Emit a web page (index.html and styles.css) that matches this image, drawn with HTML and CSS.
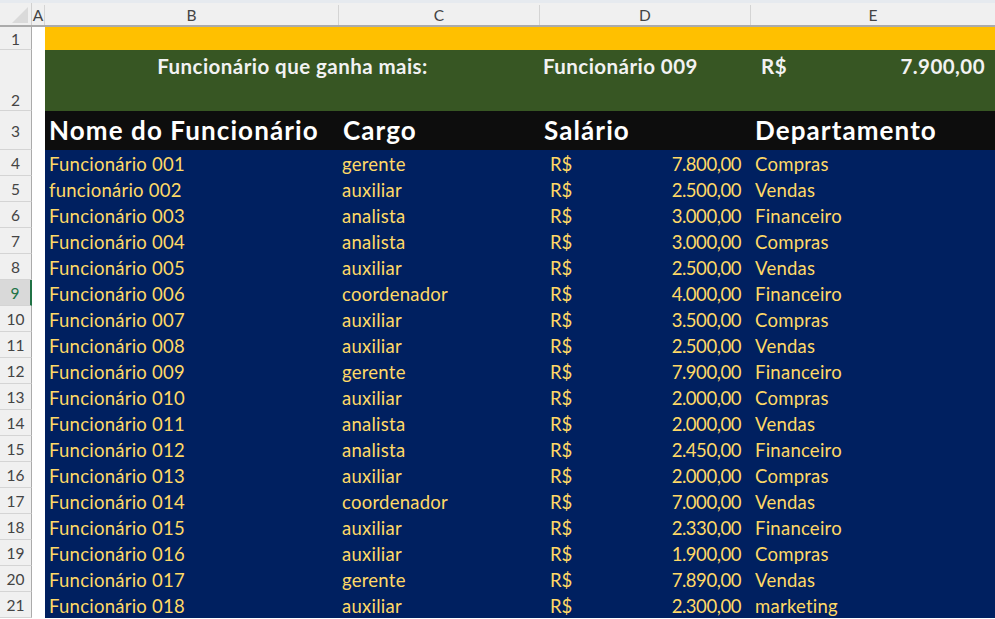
FILE: index.html
```html
<!DOCTYPE html>
<html lang="pt-BR">
<head>
<meta charset="utf-8">
<title>Planilha</title>
<link rel="stylesheet" href="styles.css">
</head>
<body>
<div class="sheet">
  <div class="topstrip"></div>
  <div class="colhdr">
    <div class="corner"><svg width="31" height="22" viewBox="0 0 31 22"><polygon points="28,4 28,20 12,20" fill="#dadada"/></svg></div>
    <div class="ch ch-a">A</div>
    <div class="ch ch-b">B</div>
    <div class="ch ch-c">C</div>
    <div class="ch ch-d">D</div>
    <div class="ch ch-e">E</div>
  </div>

  <div class="row r1">
    <div class="rh">1</div><div class="ca"></div>
    <div class="band yellow"></div>
  </div>

  <div class="row r2">
    <div class="rh rh-bottom">2</div><div class="ca"></div>
    <div class="band green">
      <div class="top-label">Funcionário que ganha mais:</div>
      <div class="top-name">Funcionário 009</div>
      <div class="top-val"><span>R$</span><span>7.900,00</span></div>
    </div>
  </div>

  <div class="row r3">
    <div class="rh">3</div><div class="ca"></div>
    <div class="band black">
      <div class="h h-b">Nome do Funcionário</div>
      <div class="h h-c">Cargo</div>
      <div class="h h-d">Salário</div>
      <div class="h h-e">Departamento</div>
    </div>
  </div>

  <div id="rows"></div>
</div>
<script src="app.js"></script>
</body>
</html>
```

FILE: app.js
```js
const data = [
  ["Funcionário 001","gerente","7.800,00","Compras"],
  ["funcionário 002","auxiliar","2.500,00","Vendas"],
  ["Funcionário 003","analista","3.000,00","Financeiro"],
  ["Funcionário 004","analista","3.000,00","Compras"],
  ["Funcionário 005","auxiliar","2.500,00","Vendas"],
  ["Funcionário 006","coordenador","4.000,00","Financeiro"],
  ["Funcionário 007","auxiliar","3.500,00","Compras"],
  ["Funcionário 008","auxiliar","2.500,00","Vendas"],
  ["Funcionário 009","gerente","7.900,00","Financeiro"],
  ["Funcionário 010","auxiliar","2.000,00","Compras"],
  ["Funcionário 011","analista","2.000,00","Vendas"],
  ["Funcionário 012","analista","2.450,00","Financeiro"],
  ["Funcionário 013","auxiliar","2.000,00","Compras"],
  ["Funcionário 014","coordenador","7.000,00","Vendas"],
  ["Funcionário 015","auxiliar","2.330,00","Financeiro"],
  ["Funcionário 016","auxiliar","1.900,00","Compras"],
  ["Funcionário 017","gerente","7.890,00","Vendas"],
  ["Funcionário 018","auxiliar","2.300,00","marketing"]
];
const host = document.getElementById("rows");
data.forEach((d, i) => {
  const n = i + 4;
  const row = document.createElement("div");
  row.className = "row data";
  row.innerHTML =
    `<div class="rh${n === 9 ? " sel" : ""}">${n}</div><div class="ca"></div>` +
    `<div class="band navy">` +
      `<div class="c c-b">${d[0]}</div>` +
      `<div class="c c-c">${d[1]}</div>` +
      `<div class="c c-d"><span>R$</span><span class="amt">${d[2]}</span></div>` +
      `<div class="c c-e">${d[3]}</div>` +
    `</div>`;
  host.appendChild(row);
});
```

FILE: styles.css
```css
* { box-sizing: border-box; }
html, body { margin: 0; padding: 0; background: #ffffff; }
body { width: 995px; height: 619px; overflow: hidden; font-family: Lato, "Open Sans", sans-serif; }

.sheet { width: 995px; }

.topstrip { height: 3px; background: #e6eaef; }

.colhdr {
  display: grid;
  grid-template-columns: 32px 13px 294px 201px 211px 244px;
  height: 24px;
  background: #f0f0f0;
  border-bottom: 2px solid #ababab;
}
.corner { border-right: 1px solid #d0d0d0; }
.corner svg { display: block; }
.ch {
  display: flex; align-items: center; justify-content: center;
  font-size: 15.5px; color: #444444;
  border-right: 1px solid #d4d4d4;
  margin: 2px 0 0 0;
}
.ch-e { border-right: 0; }

.row { display: flex; }
.rh {
  width: 32px; flex: none;
  background: #f0f0f0;
  border-right: 1px solid #ababab;
  border-bottom: 1px solid #d4d4d4;
  color: #444444; font-size: 15.5px;
  display: flex; align-items: center; justify-content: center;
  padding-top: 1px;
}
.rh-bottom { align-items: flex-end; padding-bottom: 1px; }
.rh.sel {
  background: #d9d9d9;
  color: #217346;
  border-right: 2px solid #217346;
}
.ca { width: 13px; flex: none; background: #ffffff; }

.band {
  flex: 1;
  display: grid;
  grid-template-columns: 294px 201px 211px 244px;
}
.yellow { background: #ffc000; }
.green { background: #375623; }
.black { background: #0d0d0d; }
.navy { background: #002060; }

.r1 { height: 23px; }
.r2 { height: 61px; }
.r3 { height: 39px; }
.data { height: 26px; }

/* row 2 */
.r2 .band { color: #f2f2f2; font-weight: 700; font-size: 20.5px; line-height: 24px; letter-spacing: 0.45px; }
.top-label { grid-column: 1 / 3; text-align: center; padding-top: 4px; }
.top-name { padding: 4px 0 0 3px; }
.top-val { display: flex; justify-content: space-between; padding: 4px 10px 0 10px; }

/* row 3 */
.h { color: #ffffff; font-weight: 700; font-size: 26px; line-height: 39px; letter-spacing: 1.1px; padding-left: 4px; white-space: nowrap; }

/* data */
.c { color: #ffd966; font-size: 18.5px; line-height: 26px; letter-spacing: 0.25px; padding: 1px 0 0 4px; white-space: nowrap; }
.c-c { padding-left: 3px; }
.c-d { display: flex; justify-content: space-between; padding: 1px 10px 0 10px; letter-spacing: 0; }
.amt { letter-spacing: -0.45px; }
```
